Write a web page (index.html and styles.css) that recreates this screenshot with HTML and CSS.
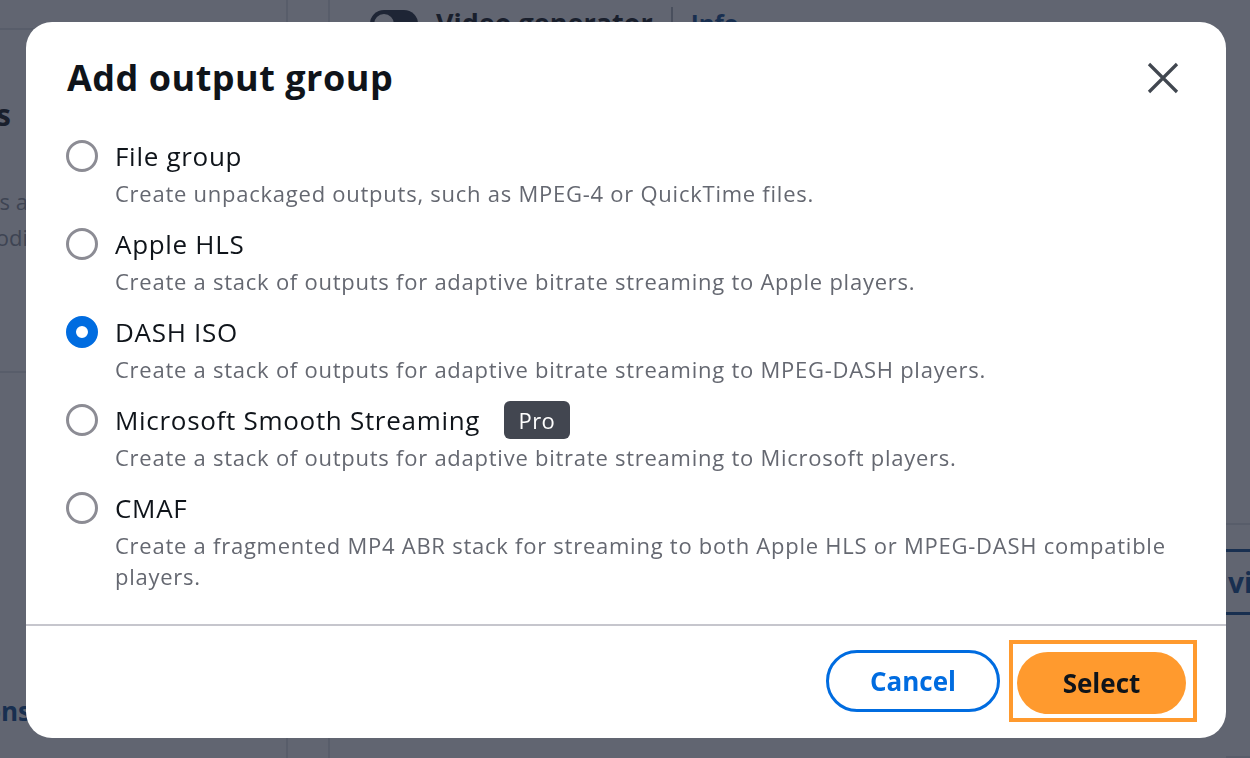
FILE: index.html
```html
<!DOCTYPE html>
<html lang="en">
<head>
  <meta charset="UTF-8" />
  <meta name="viewport" content="width=device-width, initial-scale=1.0"/>
  <title>Add output group</title>
  <link rel="stylesheet" href="styles.css">
</head>
<body>

  <div class="page">
    <aside class="side">
      <div class="side-top"></div>
      <div class="side-body">
        <h2 class="side-title">Outputs</h2>
        <p class="side-text">Output groups a<br>and the encodi</p>
      </div>
      <div class="side-rule"></div>
      <div class="side-body">
        <a class="side-link">Actions</a>
      </div>
    </aside>
    <div class="rail"></div>
    <main class="main">
      <header class="main-head">
        <span class="toggle"><span class="knob"></span></span>
        <span class="main-title">Video generator</span>
        <span class="bar"></span>
        <a class="info">Info</a>
      </header>
      <div class="section"></div>
      <div class="tabs">
        <span class="tab">view</span>
      </div>
    </main>
  </div>

  <div class="backdrop">
    <div class="modal" role="dialog">
      <div class="modal-head">
        <h1>Add output group</h1>
        <button class="close" aria-label="Close">
          <svg width="34" height="34" viewBox="0 0 34 34"><path d="M3 3 L31 31 M31 3 L3 31" stroke="#414750" stroke-width="3.2" fill="none"/></svg>
        </button>
      </div>

      <ul class="options">
        <li class="option">
          <span class="radio"></span>
          <div>
            <div class="label">File group</div>
            <div class="desc">Create unpackaged outputs, such as MPEG-4 or QuickTime files.</div>
          </div>
        </li>
        <li class="option">
          <span class="radio"></span>
          <div>
            <div class="label">Apple HLS</div>
            <div class="desc">Create a stack of outputs for adaptive bitrate streaming to Apple players.</div>
          </div>
        </li>
        <li class="option">
          <span class="radio checked"></span>
          <div>
            <div class="label">DASH ISO</div>
            <div class="desc">Create a stack of outputs for adaptive bitrate streaming to MPEG-DASH players.</div>
          </div>
        </li>
        <li class="option">
          <span class="radio"></span>
          <div>
            <div class="label">Microsoft Smooth Streaming <span class="badge">Pro</span></div>
            <div class="desc">Create a stack of outputs for adaptive bitrate streaming to Microsoft players.</div>
          </div>
        </li>
        <li class="option">
          <span class="radio"></span>
          <div>
            <div class="label">CMAF</div>
            <div class="desc">Create a fragmented MP4 ABR stack for streaming to both Apple HLS or MPEG-DASH compatible players.</div>
          </div>
        </li>
      </ul>

      <div class="modal-foot">
        <button class="btn btn-cancel">Cancel</button>
        <span class="focus-ring"><button class="btn btn-select">Select</button></span>
      </div>
    </div>
  </div>

</body>
</html>
```

FILE: styles.css
```css
:root {
  --text: #0f141a;
  --muted: #656871;
  --blue: #006ce0;
  --orange: #ff9a2e;
  --line: #c6c6cd;
}

* {
  box-sizing: border-box;
}

body {
  margin: 0;
  width: 1250px;
  height: 758px;
  overflow: hidden;
  font-family: 'Open Sans', 'Noto Sans', sans-serif;
  color: var(--text);
  background: #ffffff;
}

/* page behind the dialog */
.page {
  display: grid;
  grid-template-columns: 288px 42px 1fr;
  height: 758px;
}

.side {
  border-right: 2px solid #e2e4e8;
  overflow: hidden;
}

.side-top {
  height: 30px;
  border-bottom: 2px solid #e2e4e8;
}

/* the side panel is scrolled sideways, only its line ends show */
.side-body {
  width: 300px;
  margin-left: -272px;
  text-align: right;
  white-space: nowrap;
}

.side-title {
  margin: 64px 17px 0 0;
  font-size: 30px;
  font-weight: 700;
}

.side-text {
  margin: 48px 0 0 0;
  font-size: 22px;
  line-height: 36px;
  color: #8a8f99;
}

.side-rule {
  margin-top: 116px;
  border-top: 2px solid #e2e4e8;
}

.side-link {
  display: block;
  margin: 320px -3px 0 0;
  font-size: 26px;
  font-weight: 700;
  color: #0a4a8f;
}

.rail {
  border-right: 2px solid #e2e4e8;
}

.main {
  padding-left: 40px;
}

.main-head {
  display: flex;
  align-items: center;
  gap: 18px;
  height: 44px;
}

.toggle {
  width: 48px;
  height: 28px;
  border-radius: 14px;
  background: #1f2937;
  position: relative;
  margin-top: 4px;
}

.knob {
  position: absolute;
  left: 4px;
  top: 4px;
  width: 20px;
  height: 20px;
  border-radius: 50%;
  background: #ffffff;
}

.main-title {
  font-size: 27px;
  font-weight: 700;
}

.bar {
  width: 2px;
  height: 30px;
  background: #b0b4bb;
}

.info {
  font-size: 24px;
  font-weight: 700;
  color: #0a4a8f;
}

.section {
  height: 481px;
  border-bottom: 2px solid #e2e4e8;
}

.tabs {
  margin-left: 856px;
  padding-top: 24px;
  height: 233px;
  border-bottom: 2px solid #e2e4e8;
}

.tab {
  display: block;
  border-top: 3px solid #0a4a8f;
  border-bottom: 3px solid #0a4a8f;
  padding: 8px 0 8px 2px;
  font-size: 28px;
  line-height: 44px;
  font-weight: 700;
  color: #0a4a8f;
}

/* dialog */
.backdrop {
  position: fixed;
  inset: 0;
  background: rgba(30, 36, 52, 0.7);
  padding: 22px 24px 20px 26px;
}

.modal {
  background: #ffffff;
  border-radius: 26px;
  height: 716px;
  display: flex;
  flex-direction: column;
}

.modal-head {
  display: flex;
  justify-content: space-between;
  align-items: center;
  padding: 30px 46px 0 41px;
}

h1 {
  margin: 0;
  font-size: 36px;
  font-weight: 700;
  letter-spacing: 0.5px;
  line-height: 52px;
}

.close {
  border: none;
  background: none;
  padding: 0;
  width: 34px;
  height: 34px;
}

.options {
  list-style: none;
  margin: 0;
  padding: 30px 40px 0 40px;
  flex: 1;
}

.option {
  display: flex;
  gap: 17px;
  margin-bottom: 13px;
}

.radio {
  flex: none;
  width: 32px;
  height: 32px;
  margin-top: 6px;
  border-radius: 50%;
  border: 3px solid #8c8c94;
}

.radio.checked {
  border: 10px solid var(--blue);
}

.label {
  font-size: 26px;
  letter-spacing: 0.7px;
  line-height: 44px;
}

.badge {
  display: inline-block;
  margin-left: 16px;
  padding: 0 15px;
  border-radius: 6px;
  background: #424650;
  color: #ffffff;
  font-size: 22px;
  letter-spacing: 0.3px;
  line-height: 38px;
  vertical-align: 1px;
}

.desc {
  font-size: 22px;
  letter-spacing: 0.75px;
  line-height: 31px;
  color: var(--muted);
}

.modal-foot {
  display: flex;
  justify-content: flex-end;
  align-items: center;
  gap: 9px;
  border-top: 2px solid var(--line);
  padding: 14px 29px 16px 0;
}

.btn {
  font-family: inherit;
  font-size: 26px;
  font-weight: 700;
  height: 62px;
  border-radius: 31px;
  cursor: pointer;
}

.btn-cancel {
  width: 174px;
  background: #ffffff;
  color: var(--blue);
  border: 3px solid var(--blue);
}

.focus-ring {
  display: block;
  border: 4px solid var(--orange);
  padding: 8px 7px 4px 4px;
}

.btn-select {
  display: block;
  width: 169px;
  border: none;
  background: var(--orange);
  color: var(--text);
}
```
